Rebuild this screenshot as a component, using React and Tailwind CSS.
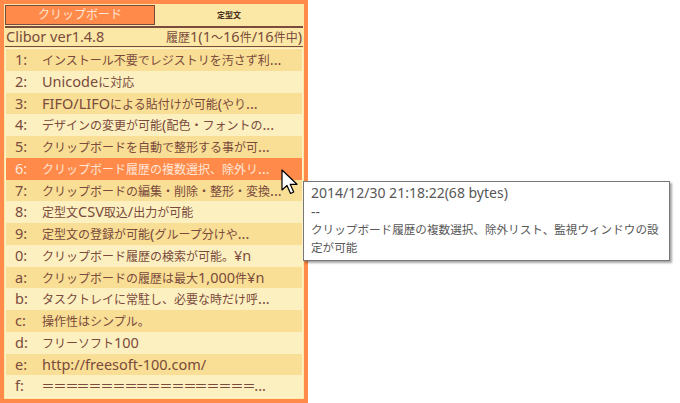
import React from "react";

const rows = [
  ["1:", "インストール不要でレジストリを汚さず利..."],
  ["2:", "Unicodeに対応"],
  ["3:", "FIFO/LIFOによる貼付けが可能(やり..."],
  ["4:", "デザインの変更が可能(配色・フォントの..."],
  ["5:", "クリップボードを自動で整形する事が可..."],
  ["6:", "クリップボード履歴の複数選択、除外リ..."],
  ["7:", "クリップボードの編集・削除・整形・変換..."],
  ["8:", "定型文CSV取込/出力が可能"],
  ["9:", "定型文の登録が可能(グループ分けや..."],
  ["0:", "クリップボード履歴の検索が可能。¥n"],
  ["a:", "クリップボードの履歴は最大1,000件¥n"],
  ["b:", "タスクトレイに常駐し、必要な時だけ呼..."],
  ["c:", "操作性はシンプル。"],
  ["d:", "フリーソフト100"],
  ["e:", "http://freesoft-100.com/"],
  ["f:", "==================..."],
];

const font = { fontFamily: '"Noto Sans", "Noto Sans CJK JP", sans-serif' };

// CJK runs are set a bit smaller so the line widths match the narrow UI font
const Txt = ({ s, cjk = "text-[12px]" }) =>
  s.split(/([\u3000-\u30ff\u4e00-\u9fff\uff00-\uffef]+|=+)/).map((p, i) => {
    if (i % 2 === 0) return <React.Fragment key={i}>{p}</React.Fragment>;
    if (p[0] === "=")
      return [...p].map((c, j) => (
        <span key={i + "-" + j} className="inline-block w-[11.8px] text-center scale-x-[1.45]">
          {c}
        </span>
      ));
    return (
      <span key={i} className={cjk}>
        {p}
      </span>
    );
  });

const Cursor = () => (
  <svg width="20" height="28" viewBox="0 0 20 28" className="absolute left-[281px] top-[169px]">
    <path
      d="M1 1 L1 21 L6 16.5 L9.5 24.5 L12.7 23 L9.2 15.3 L16 15.3 Z"
      fill="#ffffff"
      stroke="#000000"
      strokeWidth="1.2"
      strokeLinejoin="round"
    />
  </svg>
);

export default function App() {
  return (
    <div className="relative w-[680px] h-[403px] bg-white overflow-hidden" style={font}>
      <div className="w-[308px] h-[403px] border-4 border-[#ff8a4a] bg-[#fbe8a6] p-px flex flex-col">
        <div className="flex h-[20px]">
          <div className="w-[150px] border border-[#7a4a3c] bg-[#ff8a4a] text-[#ffe4d4] text-[12px] flex items-center justify-center">
            クリップボード
          </div>
          <div className="flex-1 flex items-center justify-center text-[8px] font-bold text-[#4a3020]">
            定型文
          </div>
        </div>
        <div className="mt-[1px] h-[2px] bg-[#7a4a3c]" />
        <div className="flex justify-between items-center h-[19px] px-[1px] text-[14.5px] text-[#7a4a3c] border-b border-[#7a4a3c] whitespace-nowrap">
          <span>Clibor ver1.4.8</span>
          <span>
            <Txt s="履歴1(1〜16件/16件中)" />
          </span>
        </div>
        <div className="mt-px flex-1 flex flex-col border border-[#fdf3cc]">
          {rows.map(([k, t], i) => {
            const sel = i === 5;
            const bg = sel
              ? "bg-[#ff8a4a] text-[#ffe6d8]"
              : i % 2 === 0
              ? "bg-[#f9df95] text-[#7a4a3c]"
              : "bg-[#fdf0c0] text-[#7a4a3c]";
            return (
              <div key={k} className={`flex-1 flex items-center text-[14.5px] whitespace-nowrap ${bg}`}>
                <span className="w-[36px] pl-[9px]">{k}</span>
                <span>
                  <Txt s={t} />
                </span>
              </div>
            );
          })}
        </div>
      </div>

      <Cursor />

      <div className="absolute left-[303px] top-[181px] w-[367px] h-[80px] bg-white border border-[#767676] shadow-[2px_2px_2px_rgba(0,0,0,0.35)] px-[7px] pt-px text-[14px] leading-[19px] text-[#575757] whitespace-nowrap">
        <div>2014/12/30 21:18:22(68 bytes)</div>
        <div>--</div>
        <div className="text-[11.6px] leading-[18px]">
          クリップボード履歴の複数選択、除外リスト、監視ウィンドウの設
        </div>
        <div className="text-[11.6px] leading-[17px]">定が可能</div>
      </div>
    </div>
  );
}
